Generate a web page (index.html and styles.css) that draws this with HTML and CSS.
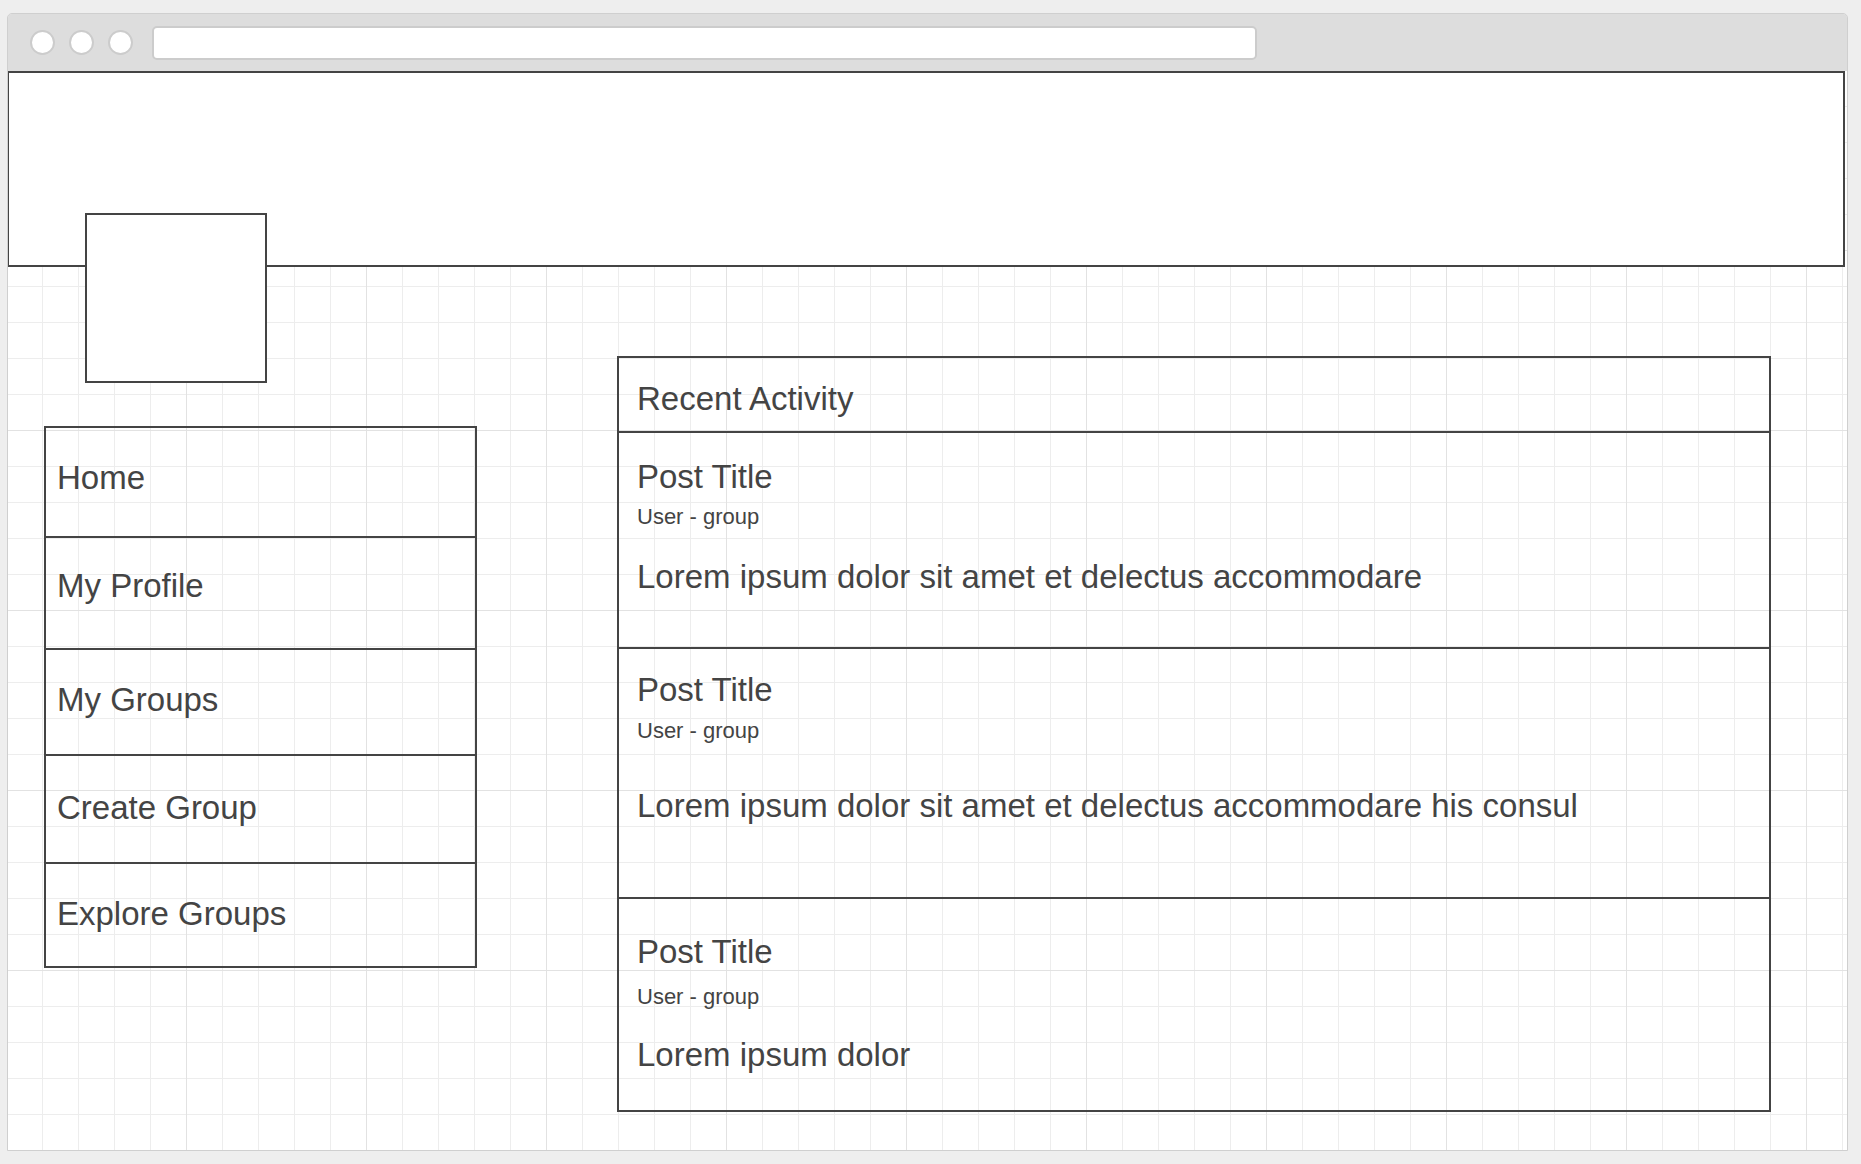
FILE: index.html
```html
<!DOCTYPE html>
<html lang="en">
<head>
<meta charset="utf-8">
<title>Wireframe</title>
<link rel="stylesheet" href="styles.css">
</head>
<body>
<div class="window">
  <div class="titlebar">
    <span class="dot"></span>
    <span class="dot"></span>
    <span class="dot"></span>
    <div class="address"></div>
  </div>
  <div class="content">
    <div class="header"></div>
    <div class="avatar"></div>
    <div class="main">
      <nav class="nav">
        <div class="nav-item nav-item--home">Home</div>
        <div class="nav-item nav-item--profile">My Profile</div>
        <div class="nav-item nav-item--groups">My Groups</div>
        <div class="nav-item nav-item--create">Create Group</div>
        <div class="nav-item nav-item--explore">Explore Groups</div>
      </nav>
      <section class="panel">
        <div class="panel-head">Recent Activity</div>
        <article class="post post--first">
          <div class="post-title">Post Title</div>
          <div class="post-meta">User - group</div>
          <div class="post-body">Lorem ipsum dolor sit amet et delectus accommodare</div>
        </article>
        <article class="post post--second">
          <div class="post-title">Post Title</div>
          <div class="post-meta">User - group</div>
          <div class="post-body">Lorem ipsum dolor sit amet et delectus accommodare his consul</div>
        </article>
        <article class="post post--third">
          <div class="post-title">Post Title</div>
          <div class="post-meta">User - group</div>
          <div class="post-body">Lorem ipsum dolor</div>
        </article>
      </section>
    </div>
  </div>
</div>
</body>
</html>
```

FILE: styles.css
```css
* {
  box-sizing: border-box;
}

html, body {
  margin: 0;
  padding: 0;
}

body {
  background: #eeeeee;
  font-family: "Liberation Sans", Arial, sans-serif;
  color: #444444;
  width: 1861px;
  height: 1164px;
  overflow: hidden;
}

.window {
  margin: 13px 0 0 7px;
  width: 1841px;
  height: 1138px;
  border: 1px solid #cfcfcf;
  border-radius: 5px 5px 0 0;
  display: flex;
  flex-direction: column;
  overflow: hidden;
}

.titlebar {
  height: 57px;
  flex: none;
  background: #dddddd;
  display: flex;
  align-items: flex-start;
  padding: 12px 0 0 22px;
}

.dot {
  width: 25px;
  height: 25px;
  margin-top: 4px;
  margin-right: 14px;
  border-radius: 50%;
  background: #ffffff;
  border: 2px solid #cccccc;
  flex: none;
}

.dot:nth-child(3) {
  margin-right: 19px;
}

.address {
  width: 1105px;
  height: 34px;
  background: #ffffff;
  border: 2px solid #cccccc;
  border-radius: 5px;
}

.content {
  position: relative;
  flex: 1;
  background-color: #ffffff;
  background-image:
    linear-gradient(to right, #e2e2e2 1px, transparent 1px),
    linear-gradient(to bottom, #e2e2e2 1px, transparent 1px),
    linear-gradient(to right, #ededed 1px, transparent 1px),
    linear-gradient(to bottom, #ededed 1px, transparent 1px);
  background-size: 180px 180px, 180px 180px, 36px 36px, 36px 36px;
  background-position: -2px -1px, -2px -1px, -2px -1px, -2px -1px;
}

.header {
  margin-left: -1px;
  width: 1838px;
  height: 196px;
  background: #ffffff;
  border: 2px solid #444444;
}

.avatar {
  position: absolute;
  left: 77px;
  top: 142px;
  width: 182px;
  height: 170px;
  background: #ffffff;
  border: 2px solid #444444;
}

.main {
  display: flex;
  align-items: flex-start;
}

.nav {
  margin: 159px 0 0 36px;
  width: 433px;
  border: 2px solid #444444;
  flex: none;
}

.nav-item {
  font-size: 33px;
  line-height: 38px;
  padding: 31px 11px 0;
  border-top: 2px solid #444444;
}

.nav-item--home {
  border-top: none;
  height: 108px;
}

.nav-item--profile {
  height: 112px;
  padding-top: 29px;
}

.nav-item--groups {
  height: 106px;
  padding-top: 31px;
}

.nav-item--create {
  height: 108px;
  padding-top: 33px;
}

.nav-item--explore {
  height: 104px;
}

.panel {
  margin: 89px 0 0 140px;
  width: 1154px;
  border: 2px solid #444444;
  flex: none;
}

.panel-head {
  font-size: 33px;
  line-height: 38px;
  padding: 22px 18px 13px;
}

.post {
  border-top: 2px solid #444444;
  padding: 0 18px;
}

.post-title {
  font-size: 33px;
  line-height: 38px;
}

.post-meta {
  font-size: 22px;
  line-height: 26px;
}

.post-body {
  font-size: 33px;
  line-height: 38px;
}

.post--first {
  padding-top: 25px;
  padding-bottom: 51px;
}

.post--first .post-meta {
  margin-top: 8px;
}

.post--first .post-body {
  margin-top: 28px;
}

.post--second {
  padding-top: 22px;
  padding-bottom: 72px;
}

.post--second .post-meta {
  margin-top: 9px;
}

.post--second .post-body {
  margin-top: 43px;
}

.post--third {
  padding-top: 34px;
  padding-bottom: 36px;
}

.post--third .post-meta {
  margin-top: 13px;
}

.post--third .post-body {
  margin-top: 26px;
}
```
